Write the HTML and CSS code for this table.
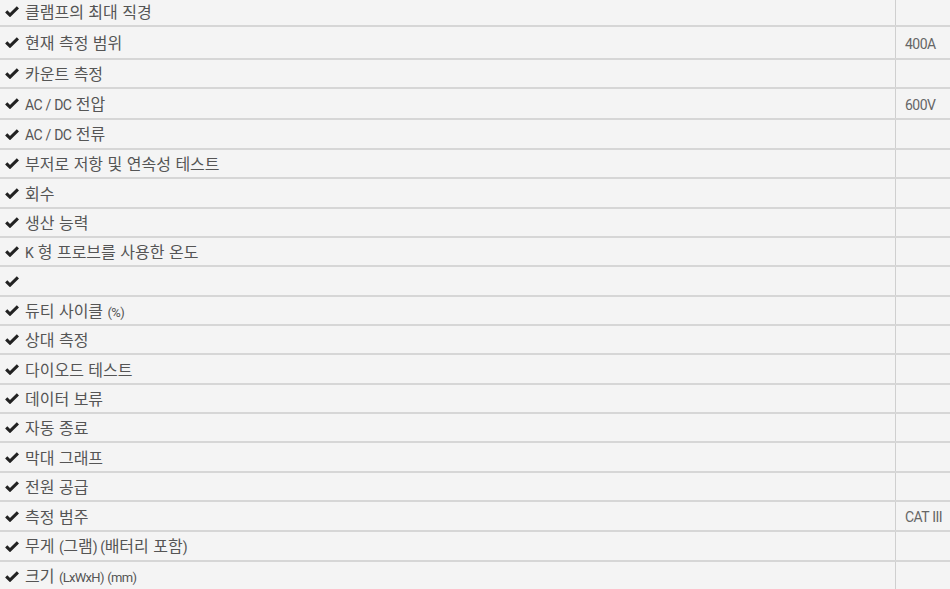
FILE: index.html
```html
<!DOCTYPE html>
<html lang="ko">
<head>
<meta charset="utf-8">
<link rel="stylesheet" href="styles.css">
</head>
<body>
<svg width="0" height="0" class="defs">
  <symbol id="chk" viewBox="0 0 14 11">
    <path d="M1.2 5.4 L5 9.1 L12.9 1.4" fill="none" stroke="#222" stroke-width="3.1" stroke-linejoin="miter" stroke-linecap="butt"/>
  </symbol>
</svg>
<div class="specs">
  <div class="row r-first"><div class="label"><svg class="ck"><use href="#chk"/></svg><span>클램프의 최대 직경</span></div><div class="val"></div></div>
  <div class="row r33"><div class="label"><svg class="ck"><use href="#chk"/></svg><span>현재 측정 범위</span></div><div class="val lat">400A</div></div>
  <div class="row r29"><div class="label"><svg class="ck"><use href="#chk"/></svg><span>카운트 측정</span></div><div class="val"></div></div>
  <div class="row r31"><div class="label"><svg class="ck"><use href="#chk"/></svg><span><span class="lat">AC / DC</span> 전압</span></div><div class="val lat">600V</div></div>
  <div class="row r30"><div class="label"><svg class="ck"><use href="#chk"/></svg><span><span class="lat">AC / DC</span> 전류</span></div><div class="val"></div></div>
  <div class="row r29"><div class="label"><svg class="ck"><use href="#chk"/></svg><span>부저로 저항 및 연속성 테스트</span></div><div class="val"></div></div>
  <div class="row r30"><div class="label"><svg class="ck"><use href="#chk"/></svg><span>회수</span></div><div class="val"></div></div>
  <div class="row r29"><div class="label"><svg class="ck"><use href="#chk"/></svg><span>생산 능력</span></div><div class="val"></div></div>
  <div class="row r29"><div class="label"><svg class="ck"><use href="#chk"/></svg><span><span class="lat">K</span> 형 프로브를 사용한 온도</span></div><div class="val"></div></div>
  <div class="row r30"><div class="label"><svg class="ck"><use href="#chk"/></svg><span></span></div><div class="val"></div></div>
  <div class="row r29"><div class="label"><svg class="ck"><use href="#chk"/></svg><span>듀티 사이클 <span class="lat sm">(%)</span></span></div><div class="val"></div></div>
  <div class="row r29"><div class="label"><svg class="ck"><use href="#chk"/></svg><span>상대 측정</span></div><div class="val"></div></div>
  <div class="row r30"><div class="label"><svg class="ck"><use href="#chk"/></svg><span>다이오드 테스트</span></div><div class="val"></div></div>
  <div class="row r29"><div class="label"><svg class="ck"><use href="#chk"/></svg><span>데이터 보류</span></div><div class="val"></div></div>
  <div class="row r29"><div class="label"><svg class="ck"><use href="#chk"/></svg><span>자동 종료</span></div><div class="val"></div></div>
  <div class="row r30"><div class="label"><svg class="ck"><use href="#chk"/></svg><span>막대 그래프</span></div><div class="val"></div></div>
  <div class="row r29"><div class="label"><svg class="ck"><use href="#chk"/></svg><span>전원 공급</span></div><div class="val"></div></div>
  <div class="row r30"><div class="label"><svg class="ck"><use href="#chk"/></svg><span>측정 범주</span></div><div class="val lat">CAT III</div></div>
  <div class="row r30"><div class="label"><svg class="ck"><use href="#chk"/></svg><span>무게 <span class="lat">(</span>그램<span class="lat">) (</span>배터리 포함<span class="lat">)</span></span></div><div class="val"></div></div>
  <div class="row r30"><div class="label"><svg class="ck"><use href="#chk"/></svg><span>크기 <span class="lat sm">(LxWxH) (mm)</span></span></div><div class="val"></div></div>
</div>
</body>
</html>
```

FILE: styles.css
```css
html, body {
  margin: 0;
  padding: 0;
  background: #f4f4f4;
  overflow: hidden;
}

.defs {
  position: absolute;
  width: 0;
  height: 0;
}

.specs {
  width: 950px;
  margin-top: -3px;
  font-family: "Noto Sans CJK KR", sans-serif;
  font-size: 16px;
  color: #555;
}

.lat {
  font-family: Roboto, "Liberation Sans", sans-serif;
  font-size: 14px;
  letter-spacing: -0.55px;
  word-spacing: 0.5px;
}

.lat.sm {
  font-size: 13px;
  letter-spacing: -0.7px;
  word-spacing: 1px;
}

.row {
  display: grid;
  grid-template-columns: 896px 1fr;
  border-bottom: 2px solid #d6d6d6;
  box-sizing: border-box;
}

.r-first { height: 30px; }
.r33 { height: 33px; }
.r31 { height: 31px; }
.r30 { height: 30px; }
.r29 { height: 29px; }

.label {
  display: flex;
  align-items: center;
  gap: 6px;
  padding-left: 5px;
  border-right: 1px solid #cfcfcf;
  white-space: nowrap;
}

.label > span {
  line-height: 1;
  padding-bottom: 1px;
}

.ck {
  width: 14px;
  height: 11px;
  flex: none;
}

.val {
  display: flex;
  align-items: center;
  padding-left: 9px;
  color: #666;
  padding-top: 2px;
}
```
